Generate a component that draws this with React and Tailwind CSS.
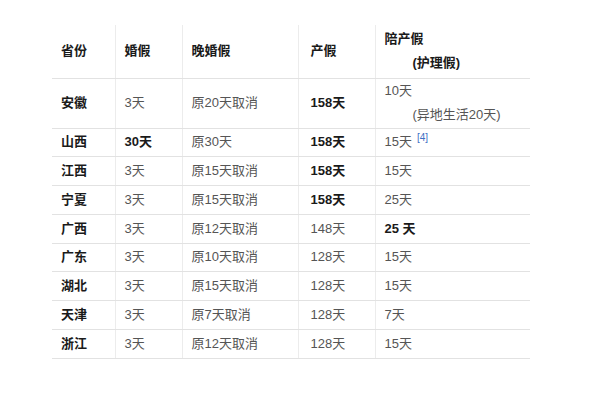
import React from 'react';

const rows = [
  { p: '安徽', h: '3天', w: '原20天取消', c: '158天', cb: true, pt: '10天', sub: '(异地生活20天)' },
  { p: '山西', h: '30天', hb: true, w: '原30天', c: '158天', cb: true, pt: '15天', ref: '[4]' },
  { p: '江西', h: '3天', w: '原15天取消', c: '158天', cb: true, pt: '15天' },
  { p: '宁夏', h: '3天', w: '原15天取消', c: '158天', cb: true, pt: '25天' },
  { p: '广西', h: '3天', w: '原12天取消', c: '148天', pt: '25 天', pb: true },
  { p: '广东', h: '3天', w: '原10天取消', c: '128天', pt: '15天' },
  { p: '湖北', h: '3天', w: '原15天取消', c: '128天', pt: '15天' },
  { p: '天津', h: '3天', w: '原7天取消', c: '128天', pt: '7天' },
  { p: '浙江', h: '3天', w: '原12天取消', c: '128天', pt: '15天' },
];

const td = 'border-b border-[#e2e2e2] border-r border-r-[#ececec] px-[9px] align-middle';

const App = () => {
  return (
    <div className="w-[600px] h-[400px] bg-white pt-[25px] pl-[52px] font-['Liberation_Sans','Noto_Sans_CJK_SC',sans-serif] text-[13px] leading-[16px] text-[#555]">
      <table className="border-collapse table-fixed w-[478px]">
        <colgroup>
          <col className="w-[63px]" />
          <col className="w-[67px]" />
          <col className="w-[116px]" />
          <col className="w-[77px]" />
          <col className="w-[155px]" />
        </colgroup>
        <thead>
          <tr className="h-[53px] text-left font-bold text-[#1a1a1a]">
            <th className={td}>省份</th>
            <th className={td}>婚假</th>
            <th className={td}>晚婚假</th>
            <th className={td + ' pl-[12px]'}>产假</th>
            <th className={td + ' border-r-0'}>
              <div>陪产假</div>
              <div className="pl-[28px] mt-[8px]">(护理假)</div>
            </th>
          </tr>
        </thead>
        <tbody>
          {rows.map((r, idx) => (
            <tr key={r.p} className={idx === 0 ? 'h-[50px]' : 'h-[28.75px]'}>
              <td className={td + ' font-bold text-[#1a1a1a]'}>{r.p}</td>
              <td className={td + (r.hb ? ' font-bold text-[#1a1a1a]' : '')}>{r.h}</td>
              <td className={td}>{r.w}</td>
              <td className={td + ' pl-[12px]' + (r.cb ? ' font-bold text-[#1a1a1a]' : '')}>{r.c}</td>
              <td className={td + ' border-r-0' + (r.pb ? ' font-bold text-[#1a1a1a]' : '')}>
                {r.pt}
                {r.ref && (
                  <span className="ml-[5px] text-[10px] text-[#3b6fc4] relative -top-[5px]">{r.ref}</span>
                )}
                {r.sub && <div className="pl-[28px] mt-[8px]">{r.sub}</div>}
              </td>
            </tr>
          ))}
        </tbody>
      </table>
    </div>
  );
};

export default App;
